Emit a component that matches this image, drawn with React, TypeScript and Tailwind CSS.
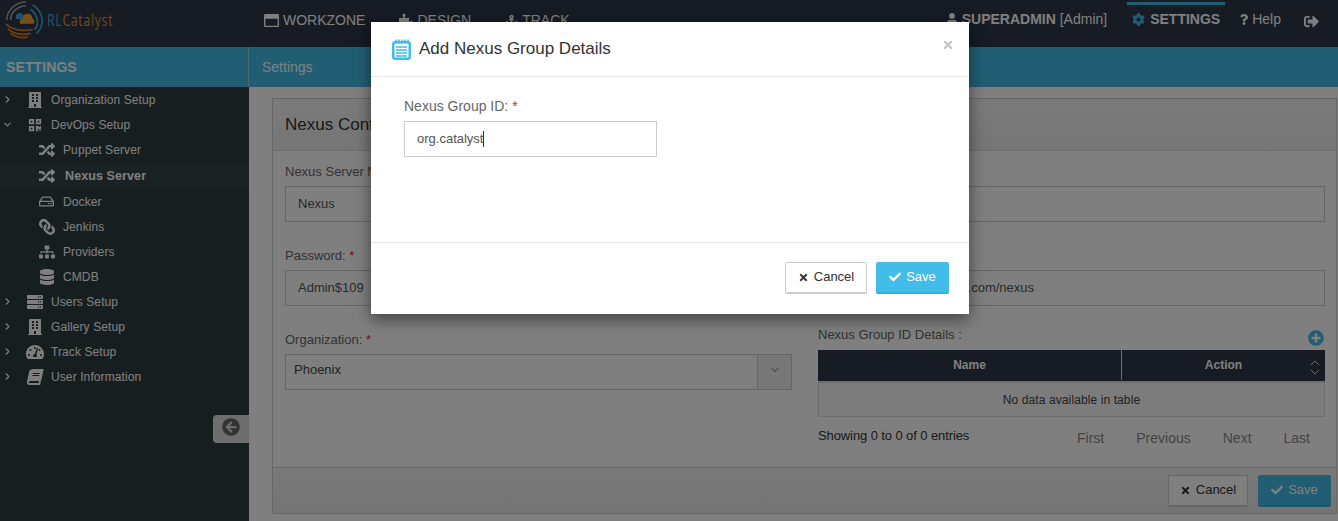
import type { ReactNode } from "react";
import { ChevronDown, ChevronRight } from "lucide-react";
import {
  FaAnchor,
  FaArrowCircleLeft,
  FaBook,
  FaBuilding,
  FaCheck,
  FaCog,
  FaDatabase,
  FaLink,
  FaPlusCircle,
  FaPuzzlePiece,
  FaQrcode,
  FaQuestion,
  FaRandom,
  FaRegHdd,
  FaRegWindowMaximize,
  FaServer,
  FaSignOutAlt,
  FaSitemap,
  FaTachometerAlt,
  FaTimes,
  FaUser,
} from "react-icons/fa";

function Logo() {
  return (
    <div className="flex items-center">
      <svg width="42" height="40" viewBox="0 0 44 40" fill="none">
        <path d="M4 20C4 10 12 2 24 1" stroke="#aaa" strokeWidth="1.6" />
        <path d="M8 20C8 12 14 6 24 5" stroke="#aaa" strokeWidth="1.6" />
        <path d="M31 4C43 12 44 26 35 34" stroke="#3fa9d8" strokeWidth="1.8" />
        <path d="M29 9C37 15 38 25 33 30" stroke="#3fa9d8" strokeWidth="1.8" />
        <path d="M3 24C8 30 20 32 31 30" stroke="#e07a1f" strokeWidth="1.8" />
        <path d="M5 29C11 35 21 36 29 34" stroke="#e07a1f" strokeWidth="1.8" />
        <path d="M8 34C13 38 20 39 26 38" stroke="#e07a1f" strokeWidth="1.8" />
        <path d="M14 19a4 4 0 0 1 7-4a5 5 0 0 1 8 3v1z" fill="#3fa9d8" />
        <path d="M18 24a4 4 0 0 1 3-6a5 5 0 0 1 10 1a3 3 0 0 1 1 5z" fill="#f0a22e" />
      </svg>
      <span className="ml-[2px] text-[17px] tracking-[1px] [transform:scaleX(0.72)] origin-left font-['Open_Sans',sans-serif]">
        <span className="text-[#3fa9d8]">RL</span>
        <span className="text-[#e09a2a]">Catalyst</span>
      </span>
    </div>
  );
}

function NavItem({ icon, label, bold }: { icon: ReactNode; label: string; bold?: boolean }) {
  return (
    <div className={`flex items-center gap-[4px] text-[14px] text-white ${bold ? "font-bold" : ""}`}>
      {icon}
      <span>{label}</span>
    </div>
  );
}

function Header() {
  return (
    <header className="h-[47px] shrink-0 flex items-center bg-[#2c3648] text-white">
      <div className="w-[264px] pl-[3px] pb-[7px] shrink-0">
        <Logo />
      </div>
      <div className="flex items-center gap-[34px] pb-[7px]">
        <NavItem icon={<FaRegWindowMaximize className="w-[15px] h-[15px]" />} label="WORKZONE" />
        <NavItem icon={<FaPuzzlePiece className="w-[14px] h-[14px]" />} label="DESIGN" />
        <NavItem icon={<FaAnchor className="w-[13px] h-[13px]" />} label="TRACK" />
      </div>
      <div className="ml-auto flex items-start h-full pt-[2px] text-[14px]">
        <div className="h-[34px] flex items-center gap-[4px] mr-[20px]">
          <FaUser className="w-[12px] h-[12px]" />
          <span>
            <b>SUPERADMIN</b> [Admin]
          </span>
        </div>
        <div className="h-[31px] w-[98px] flex items-center justify-center gap-[5px] border-t-[3px] border-[#42bce8] font-bold">
          <FaCog className="w-[13px] h-[13px] text-[#42bce8]" />
          SETTINGS
        </div>
        <div className="h-[34px] flex items-center gap-[3px] ml-[14px]">
          <FaQuestion className="w-[10px] h-[11px]" />
          Help
        </div>
        <div className="h-[38px] flex items-center ml-[23px] mr-[19px]">
          <FaSignOutAlt className="w-[15px] h-[15px]" />
        </div>
      </div>
    </header>
  );
}

function SideRow({ icon, label, caret }: { icon: ReactNode; label: string; caret: "right" | "down" }) {
  return (
    <div className="h-[25px] flex items-center">
      <div className="w-[23px] pl-[2px]">
        {caret === "right" ? <ChevronRight className="w-[11px] h-[11px]" strokeWidth={2.5} /> : <ChevronDown className="w-[11px] h-[11px]" strokeWidth={2.5} />}
      </div>
      <div className="w-[24px] flex justify-center">{icon}</div>
      <span className="ml-[4px]">{label}</span>
    </div>
  );
}

function SubRow({ icon, label, active }: { icon: ReactNode; label: string; active?: boolean }) {
  return (
    <div className={`flex items-center pl-[39px] ${active ? "h-[27px] pt-[1px] bg-[#374548] font-bold text-[12.5px]" : "h-[25px]"}`}>
      <div className={`${active ? "w-[26px]" : "w-[24px]"} flex`}>{icon}</div>
      <span>{label}</span>
    </div>
  );
}

function Sidebar() {
  const cls = "w-[16px] h-[16px]";
  return (
    <aside className="relative w-[249px] shrink-0 bg-[#2e3c40] text-[12px] tracking-[0.1px] text-white">
      <div className="h-[40px] flex items-center pl-[6px] bg-[#42bce8] border-r border-[#9ccfe2] text-white text-[14px] font-bold">
        SETTINGS
      </div>
      <SideRow caret="right" label="Organization Setup" icon={<FaBuilding className={cls} />} />
      <SideRow caret="down" label="DevOps Setup" icon={<FaQrcode className="w-[14px] h-[14px]" />} />
      <SubRow label="Puppet Server" icon={<FaRandom className={cls} />} />
      <SubRow label="Nexus Server" active icon={<FaRandom className={cls} />} />
      <SubRow label="Docker" icon={<FaRegHdd className="w-[15px] h-[15px]" />} />
      <SubRow label="Jenkins" icon={<FaLink className={`${cls} -scale-x-100`} />} />
      <SubRow label="Providers" icon={<FaSitemap className={cls} />} />
      <SubRow label="CMDB" icon={<FaDatabase className={cls} />} />
      <SideRow caret="right" label="Users Setup" icon={<FaServer className="w-[20px] h-[16px]" />} />
      <SideRow caret="right" label="Gallery Setup" icon={<FaBuilding className={cls} />} />
      <SideRow caret="right" label="Track Setup" icon={<FaTachometerAlt className="w-[18px] h-[16px]" />} />
      <SideRow caret="right" label="User Information" icon={<FaBook className={`${cls} -skew-x-12`} />} />
      {/* collapse handle */}
      <div className="absolute right-0 top-[368px] w-[36px] h-[28px] pl-[9px] pb-[4px] flex items-center bg-[#dcdcdc] rounded-l-[4px]">
        <FaArrowCircleLeft className="w-[18px] h-[18px] text-[#666]" />
      </div>
    </aside>
  );
}

function Field({ label, children }: { label: string; children: ReactNode }) {
  return (
    <div className="h-[84px]">
      <div className="h-[23px] leading-[18px] text-[13px] text-[#666] whitespace-nowrap">
        {label}: <span className="text-[#e02020]">*</span>
      </div>
      {children}
    </div>
  );
}

function TextBox({ value }: { value: string }) {
  return (
    <div className="h-[36px] flex items-center px-[12px] border border-[#ccc] bg-white text-[13px] text-[#555]">
      {value}
    </div>
  );
}

function Panel() {
  return (
    <section className="flex flex-col h-[416px] border border-[#ccc] bg-white">
      <div className="h-[52px] shrink-0 flex items-center pl-[12px] border-b border-[#ddd] bg-gradient-to-b from-[#f6f6f6] to-[#ececec] text-[17px] text-[#333]">
        Nexus Configuration
      </div>
      <div className="flex-1 pl-[12px] pr-[11px] pt-[12px] grid grid-cols-[507px_507px] gap-x-[26px] content-start">
        <Field label="Nexus Server Name">
          <TextBox value="Nexus" />
        </Field>
        <Field label="User Name">
          <TextBox value="nexus" />
        </Field>
        <Field label="Password">
          <TextBox value="Admin$109" />
        </Field>
        <Field label="Nexus Server URL">
          <TextBox value="http://nexus01.rlcatalyst.com/nexus" />
        </Field>
        <Field label="Organization">
          <div className="h-[36px] flex items-center border border-[#ccc] text-[13px] text-[#444]">
            <span className="flex-1 pl-[8px] pb-[4px]">Phoenix</span>
            <div className="w-[34px] h-full pb-[4px] flex items-center justify-center bg-[#eee] border-l border-[#ccc] text-[#666]">
              <ChevronDown className="w-[12px] h-[12px]" strokeWidth={2} />
            </div>
          </div>
        </Field>
        <div className="-mt-[5px]">
          <div className="flex items-center justify-between h-[20px] -mt-[1px] pr-[1px] text-[13px] text-[#666]">
            <span>Nexus Group ID Details :</span>
            <FaPlusCircle className="w-[16px] h-[16px] mt-[5px] text-[#42bce8]" />
          </div>
          <div className="mt-[5px] flex h-[33px] pb-[1px] bg-[#2c3648] border-b-2 border-[#ddd] text-white text-[12px] font-bold">
            <div className="w-[304px] flex items-center justify-center border-r border-[#ddd]">Name</div>
            <div className="relative flex-1 flex items-center justify-center">
              Action
              <svg className="absolute right-[5px] top-[10px]" width="10" height="15" viewBox="0 0 10 15" fill="none" stroke="#ddd">
                <path d="M1 5l4-4l4 4" />
                <path d="M1 10l4 4l4-4" />
              </svg>
            </div>
          </div>
          <div className="h-[34px] flex items-center justify-center border border-t-0 border-[#ddd] bg-[#f9f9f9] text-[12px] tracking-[0.1px] text-[#444]">
            No data available in table
          </div>
          <div className="flex items-center justify-between mt-[8px] text-[#555]">
            <span className="text-[13px] tracking-[-0.1px] text-[#333] -mt-[2px]">Showing 0 to 0 of 0 entries</span>
            <div className="flex gap-[32px] pr-[15px] pt-[3px] text-[14px] text-[#888]">
              <span>First</span>
              <span>Previous</span>
              <span>Next</span>
              <span>Last</span>
            </div>
          </div>
        </div>
      </div>
      <div className="h-[46px] shrink-0 flex items-center justify-end gap-[10px] pr-[5px] border-t border-[#ccc] bg-gradient-to-b from-[#f2f2f2] to-[#e8e8e8]">
        <CancelButton width="w-[80px]" />
        <SaveButton />
      </div>
    </section>
  );
}

function CancelButton({ width }: { width: string }) {
  return (
    <button className={`${width} h-[32px] flex items-center justify-center gap-[5px] bg-white border border-[#ccc] border-b-2 rounded-[2px] text-[13px] text-[#333]`}>
      <FaTimes className="w-[11px] h-[11px]" />
      Cancel
    </button>
  );
}

function SaveButton() {
  return (
    <button className="w-[73px] h-[32px] flex items-center justify-center gap-[5px] bg-[#42bce8] rounded-[2px] border-b-2 border-[#38aed8] text-[13px] text-white">
      <FaCheck className="w-[12px] h-[12px]" />
      Save
    </button>
  );
}

function NexusGroupModal() {
  return (
    <div className="absolute left-[371px] top-[22px] w-[598px] h-[292px] flex flex-col bg-white shadow-[0_5px_15px_rgba(0,0,0,0.5)]">
      <div className="relative h-[55px] shrink-0 flex items-center pl-[21px] border-b border-[#e5e5e5]">
        <svg className="mr-[8px]" width="19" height="21" viewBox="0 0 19 21" fill="none">
          <rect x="1.25" y="3.25" width="16.5" height="16.5" rx="2" stroke="#42bce8" strokeWidth="2.5" />
          <path d="M4 0.5v4M7 0.5v4M10 0.5v4M13 0.5v4M16 0.5v4" stroke="#42bce8" strokeWidth="1.5" />
          <path d="M4 8h11M4 11h11M4 14h11M4 17h11" stroke="#42bce8" strokeWidth="1.5" />
        </svg>
        <span className="text-[17px] text-[#333]">Add Nexus Group Details</span>
        <FaTimes className="absolute right-[15px] top-[17px] w-[12px] h-[12px] text-[#c4c4c4]" />
      </div>
      <div className="flex-1 pl-[33px] pt-[19px]">
        <div className="h-[25px] text-[14px] text-[#666]">
          Nexus Group ID: <span className="text-[#e02020]">*</span>
        </div>
        <div className="w-[253px] h-[36px] flex items-center pl-[12px] border border-[#ccc] text-[13px] text-[#555]">
          org.catalyst
          <span className="w-px h-[16px] bg-[#333]" />
        </div>
      </div>
      <div className="h-[72px] shrink-0 flex items-center justify-end gap-[9px] pr-[20px] pb-[2px] border-t border-[#e5e5e5]">
        <CancelButton width="w-[82px]" />
        <SaveButton />
      </div>
    </div>
  );
}

export default function App() {
  return (
    <div className="relative h-screen overflow-hidden flex flex-col bg-white font-['Liberation_Sans',sans-serif]">
      <Header />
      <div className="flex-1 flex min-h-0">
        <Sidebar />
        <main className="flex-1 min-w-0 flex flex-col">
          <div className="h-[40px] shrink-0 flex items-center pl-[13px] bg-[#42bce8] text-[14px] text-white">Settings</div>
          <div className="pl-[23px] pr-px pt-[11px]">
            <Panel />
          </div>
        </main>
      </div>
      {/* backdrop + dialog */}
      <div className="absolute inset-0 bg-black/50" />
      <NexusGroupModal />
    </div>
  );
}
